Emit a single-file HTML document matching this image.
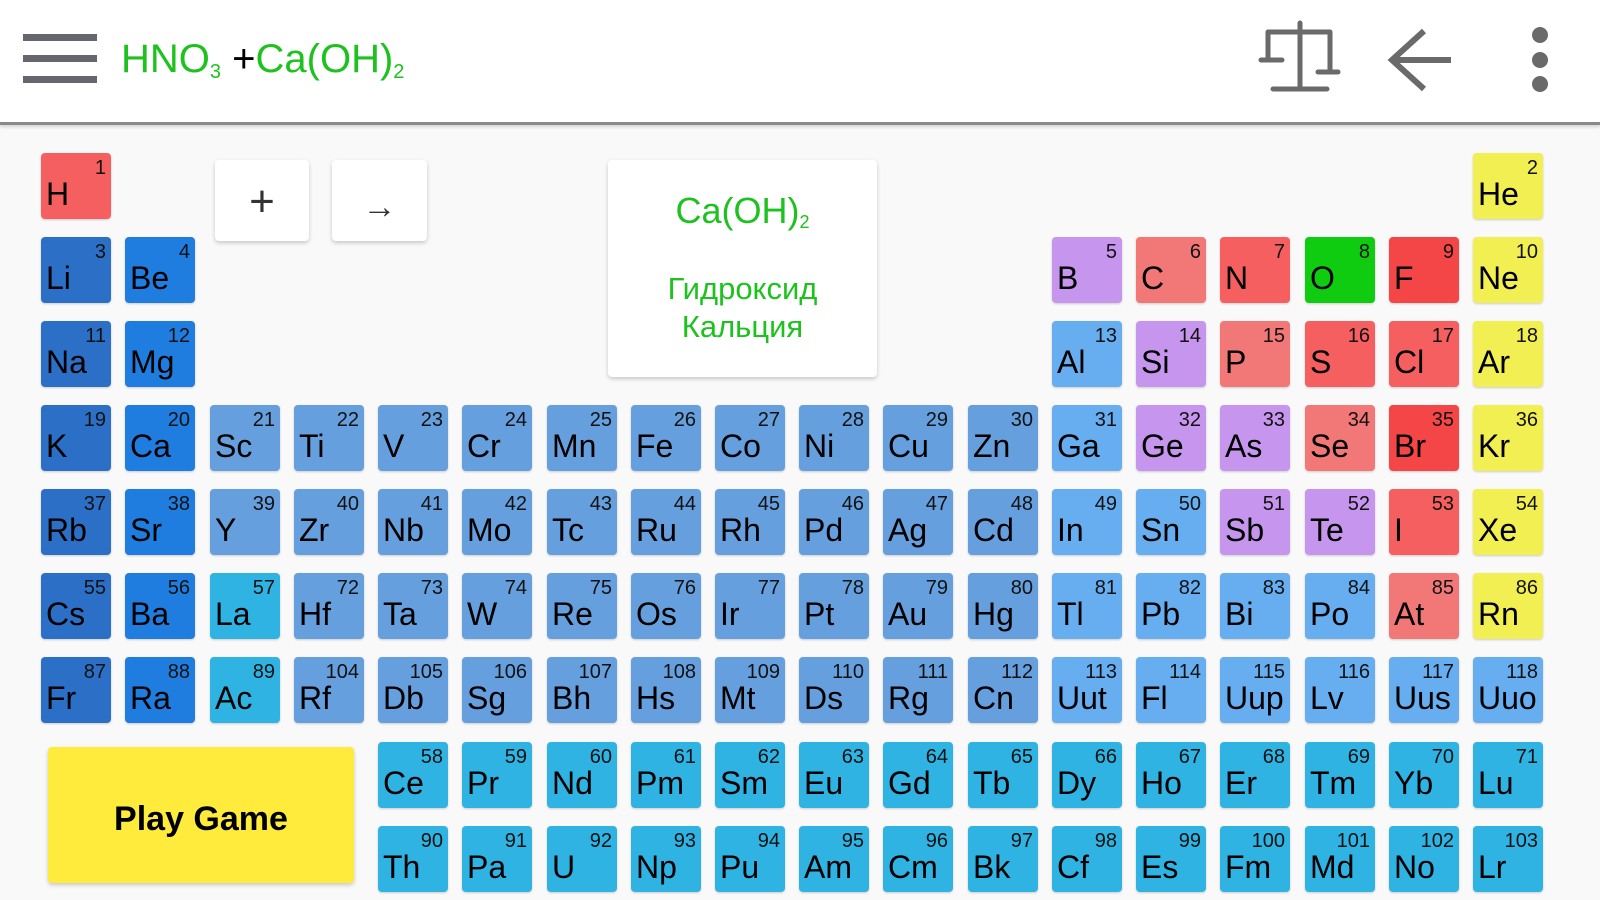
<!DOCTYPE html>
<html><head><meta charset="utf-8"><style>
*{margin:0;padding:0;box-sizing:border-box}
body{width:1600px;height:900px;background:#f9f9f9;font-family:"Liberation Sans",Roboto,sans-serif;position:relative;overflow:hidden}
#hd{position:absolute;left:0;top:0;width:1600px;height:125px;background:#fff;border-bottom:3px solid #8a8a8a;box-shadow:0 2px 3px rgba(0,0,0,.15)}
.ham{position:absolute;left:23px;width:74px;height:7px;background:#66666f}
#title{position:absolute;left:121px;top:37px;font-size:40px;color:#1ec21e;white-space:nowrap}
#title sub{font-size:20px;vertical-align:-6px}
#title .k{color:#000}
.t{position:absolute;width:70px;height:66px;border-radius:4px;box-shadow:0 1px 2px rgba(0,0,0,.18)}
.t b{position:absolute;left:5px;top:23px;font-weight:normal;font-size:32px;color:#000;line-height:36px}
.t i{position:absolute;right:5px;top:4px;font-style:normal;font-size:20px;color:#111;line-height:22px}
.c1{left:41px}.c2{left:125px}.c3{left:210px}.c4{left:294px}.c5{left:378px}.c6{left:462px}.c7{left:547px}.c8{left:631px}.c9{left:715px}.c10{left:799px}.c11{left:883px}.c12{left:968px}.c13{left:1052px}.c14{left:1136px}.c15{left:1220px}.c16{left:1305px}.c17{left:1389px}.c18{left:1473px}
.r1{top:153px}.r2{top:237px}.r3{top:321px}.r4{top:405px}.r5{top:489px}.r6{top:573px}.r7{top:657px}.r8{top:742px}.r9{top:826px}
.al{background:#2b70c6}.ae{background:#1f7ddf}.tm{background:#659fdd}.pm{background:#66aef0}.md{background:#c695ed}.nb{background:#f2ef52}.ln{background:#2fb3e3}
.rd{background:#f55f5f}.rl{background:#f27878}.rs{background:#f44646}.gr{background:#0fcc10}
.btn{position:absolute;background:#fff;border-radius:4px;box-shadow:0 2px 4px rgba(0,0,0,.2);text-align:center;color:#333}
</style></head><body>
<div id="hd">
<div class="ham" style="top:34px"></div><div class="ham" style="top:55px"></div><div class="ham" style="top:76px"></div>
<div id="title">HNO<sub>3</sub> <span class="k">+</span>Ca(OH)<sub>2</sub></div>
<svg style="position:absolute;left:0;top:0" width="1600" height="120">
<g stroke="#6a6a6a" stroke-width="5" stroke-linecap="round" fill="none">
<path d="M1300 23V88M1268 32H1330M1268 32V60M1261 60H1282M1330 32V72M1318 72H1338M1273 89H1327"/>
<path d="M1424 31L1392 60L1424 89M1392 60H1451" stroke-width="6" stroke-linecap="butt"/>
</g>
<g fill="#6a6a6a"><circle cx="1540" cy="35" r="8"/><circle cx="1540" cy="60" r="8"/><circle cx="1540" cy="84" r="8"/></g>
</svg>
</div>

<div class="btn" style="left:215px;top:160px;width:94px;height:81px;font-size:44px;line-height:84px">+</div>
<div class="btn" style="left:332px;top:160px;width:95px;height:81px;font-size:34px;line-height:94px">→</div>
<div class="btn" style="left:608px;top:160px;width:269px;height:217px;color:#1ec21e">
<div style="font-size:36px;margin-top:30px">Ca(OH)<sub style="font-size:18px;vertical-align:-5px">2</sub></div>
<div style="font-size:31px;line-height:38px;margin-top:37px">Гидроксид<br>Кальция</div>
</div>
<div class="btn" style="left:48px;top:747px;width:306px;height:136px;background:#ffeb3b;color:#000;font-weight:bold;font-size:34px;line-height:144px">Play Game</div>

<div class="t c1 r1 rd"><b>H</b><i>1</i></div>
<div class="t c18 r1 nb"><b>He</b><i>2</i></div>
<div class="t c1 r2 al"><b>Li</b><i>3</i></div>
<div class="t c2 r2 ae"><b>Be</b><i>4</i></div>
<div class="t c13 r2 md"><b>B</b><i>5</i></div>
<div class="t c14 r2 rl"><b>C</b><i>6</i></div>
<div class="t c15 r2 rd"><b>N</b><i>7</i></div>
<div class="t c16 r2 gr"><b>O</b><i>8</i></div>
<div class="t c17 r2 rs"><b>F</b><i>9</i></div>
<div class="t c18 r2 nb"><b>Ne</b><i>10</i></div>
<div class="t c1 r3 al"><b>Na</b><i>11</i></div>
<div class="t c2 r3 ae"><b>Mg</b><i>12</i></div>
<div class="t c13 r3 pm"><b>Al</b><i>13</i></div>
<div class="t c14 r3 md"><b>Si</b><i>14</i></div>
<div class="t c15 r3 rl"><b>P</b><i>15</i></div>
<div class="t c16 r3 rd"><b>S</b><i>16</i></div>
<div class="t c17 r3 rd"><b>Cl</b><i>17</i></div>
<div class="t c18 r3 nb"><b>Ar</b><i>18</i></div>
<div class="t c1 r4 al"><b>K</b><i>19</i></div>
<div class="t c2 r4 ae"><b>Ca</b><i>20</i></div>
<div class="t c3 r4 tm"><b>Sc</b><i>21</i></div>
<div class="t c4 r4 tm"><b>Ti</b><i>22</i></div>
<div class="t c5 r4 tm"><b>V</b><i>23</i></div>
<div class="t c6 r4 tm"><b>Cr</b><i>24</i></div>
<div class="t c7 r4 tm"><b>Mn</b><i>25</i></div>
<div class="t c8 r4 tm"><b>Fe</b><i>26</i></div>
<div class="t c9 r4 tm"><b>Co</b><i>27</i></div>
<div class="t c10 r4 tm"><b>Ni</b><i>28</i></div>
<div class="t c11 r4 tm"><b>Cu</b><i>29</i></div>
<div class="t c12 r4 tm"><b>Zn</b><i>30</i></div>
<div class="t c13 r4 pm"><b>Ga</b><i>31</i></div>
<div class="t c14 r4 md"><b>Ge</b><i>32</i></div>
<div class="t c15 r4 md"><b>As</b><i>33</i></div>
<div class="t c16 r4 rl"><b>Se</b><i>34</i></div>
<div class="t c17 r4 rs"><b>Br</b><i>35</i></div>
<div class="t c18 r4 nb"><b>Kr</b><i>36</i></div>
<div class="t c1 r5 al"><b>Rb</b><i>37</i></div>
<div class="t c2 r5 ae"><b>Sr</b><i>38</i></div>
<div class="t c3 r5 tm"><b>Y</b><i>39</i></div>
<div class="t c4 r5 tm"><b>Zr</b><i>40</i></div>
<div class="t c5 r5 tm"><b>Nb</b><i>41</i></div>
<div class="t c6 r5 tm"><b>Mo</b><i>42</i></div>
<div class="t c7 r5 tm"><b>Tc</b><i>43</i></div>
<div class="t c8 r5 tm"><b>Ru</b><i>44</i></div>
<div class="t c9 r5 tm"><b>Rh</b><i>45</i></div>
<div class="t c10 r5 tm"><b>Pd</b><i>46</i></div>
<div class="t c11 r5 tm"><b>Ag</b><i>47</i></div>
<div class="t c12 r5 tm"><b>Cd</b><i>48</i></div>
<div class="t c13 r5 pm"><b>In</b><i>49</i></div>
<div class="t c14 r5 pm"><b>Sn</b><i>50</i></div>
<div class="t c15 r5 md"><b>Sb</b><i>51</i></div>
<div class="t c16 r5 md"><b>Te</b><i>52</i></div>
<div class="t c17 r5 rd"><b>I</b><i>53</i></div>
<div class="t c18 r5 nb"><b>Xe</b><i>54</i></div>
<div class="t c1 r6 al"><b>Cs</b><i>55</i></div>
<div class="t c2 r6 ae"><b>Ba</b><i>56</i></div>
<div class="t c3 r6 ln"><b>La</b><i>57</i></div>
<div class="t c4 r6 tm"><b>Hf</b><i>72</i></div>
<div class="t c5 r6 tm"><b>Ta</b><i>73</i></div>
<div class="t c6 r6 tm"><b>W</b><i>74</i></div>
<div class="t c7 r6 tm"><b>Re</b><i>75</i></div>
<div class="t c8 r6 tm"><b>Os</b><i>76</i></div>
<div class="t c9 r6 tm"><b>Ir</b><i>77</i></div>
<div class="t c10 r6 tm"><b>Pt</b><i>78</i></div>
<div class="t c11 r6 tm"><b>Au</b><i>79</i></div>
<div class="t c12 r6 tm"><b>Hg</b><i>80</i></div>
<div class="t c13 r6 pm"><b>Tl</b><i>81</i></div>
<div class="t c14 r6 pm"><b>Pb</b><i>82</i></div>
<div class="t c15 r6 pm"><b>Bi</b><i>83</i></div>
<div class="t c16 r6 pm"><b>Po</b><i>84</i></div>
<div class="t c17 r6 rl"><b>At</b><i>85</i></div>
<div class="t c18 r6 nb"><b>Rn</b><i>86</i></div>
<div class="t c1 r7 al"><b>Fr</b><i>87</i></div>
<div class="t c2 r7 ae"><b>Ra</b><i>88</i></div>
<div class="t c3 r7 ln"><b>Ac</b><i>89</i></div>
<div class="t c4 r7 tm"><b>Rf</b><i>104</i></div>
<div class="t c5 r7 tm"><b>Db</b><i>105</i></div>
<div class="t c6 r7 tm"><b>Sg</b><i>106</i></div>
<div class="t c7 r7 tm"><b>Bh</b><i>107</i></div>
<div class="t c8 r7 tm"><b>Hs</b><i>108</i></div>
<div class="t c9 r7 tm"><b>Mt</b><i>109</i></div>
<div class="t c10 r7 tm"><b>Ds</b><i>110</i></div>
<div class="t c11 r7 tm"><b>Rg</b><i>111</i></div>
<div class="t c12 r7 tm"><b>Cn</b><i>112</i></div>
<div class="t c13 r7 pm"><b>Uut</b><i>113</i></div>
<div class="t c14 r7 pm"><b>Fl</b><i>114</i></div>
<div class="t c15 r7 pm"><b>Uup</b><i>115</i></div>
<div class="t c16 r7 pm"><b>Lv</b><i>116</i></div>
<div class="t c17 r7 pm"><b>Uus</b><i>117</i></div>
<div class="t c18 r7 pm"><b>Uuo</b><i>118</i></div>
<div class="t c5 r8 ln"><b>Ce</b><i>58</i></div>
<div class="t c6 r8 ln"><b>Pr</b><i>59</i></div>
<div class="t c7 r8 ln"><b>Nd</b><i>60</i></div>
<div class="t c8 r8 ln"><b>Pm</b><i>61</i></div>
<div class="t c9 r8 ln"><b>Sm</b><i>62</i></div>
<div class="t c10 r8 ln"><b>Eu</b><i>63</i></div>
<div class="t c11 r8 ln"><b>Gd</b><i>64</i></div>
<div class="t c12 r8 ln"><b>Tb</b><i>65</i></div>
<div class="t c13 r8 ln"><b>Dy</b><i>66</i></div>
<div class="t c14 r8 ln"><b>Ho</b><i>67</i></div>
<div class="t c15 r8 ln"><b>Er</b><i>68</i></div>
<div class="t c16 r8 ln"><b>Tm</b><i>69</i></div>
<div class="t c17 r8 ln"><b>Yb</b><i>70</i></div>
<div class="t c18 r8 ln"><b>Lu</b><i>71</i></div>
<div class="t c5 r9 ln"><b>Th</b><i>90</i></div>
<div class="t c6 r9 ln"><b>Pa</b><i>91</i></div>
<div class="t c7 r9 ln"><b>U</b><i>92</i></div>
<div class="t c8 r9 ln"><b>Np</b><i>93</i></div>
<div class="t c9 r9 ln"><b>Pu</b><i>94</i></div>
<div class="t c10 r9 ln"><b>Am</b><i>95</i></div>
<div class="t c11 r9 ln"><b>Cm</b><i>96</i></div>
<div class="t c12 r9 ln"><b>Bk</b><i>97</i></div>
<div class="t c13 r9 ln"><b>Cf</b><i>98</i></div>
<div class="t c14 r9 ln"><b>Es</b><i>99</i></div>
<div class="t c15 r9 ln"><b>Fm</b><i>100</i></div>
<div class="t c16 r9 ln"><b>Md</b><i>101</i></div>
<div class="t c17 r9 ln"><b>No</b><i>102</i></div>
<div class="t c18 r9 ln"><b>Lr</b><i>103</i></div>
</body></html>
